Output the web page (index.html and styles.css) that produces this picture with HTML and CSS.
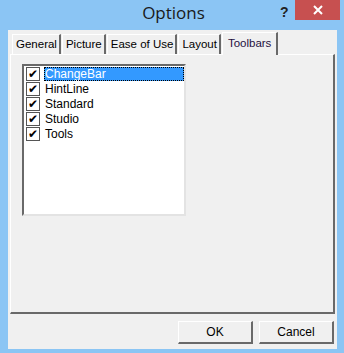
FILE: index.html
```html
<!DOCTYPE html>
<html lang="en">
<head>
    <meta charset="UTF-8">
    <title>Options</title>
    <link rel="stylesheet" href="styles.css">
</head>
<body>
    <div class="window">
        <div class="titlebar">
            <span class="title">Options</span>
            <span class="help">?</span>
            <span class="close">
                <svg width="10" height="10" viewBox="0 0 10 10">
                    <path d="M1 1 L9 9 M9 1 L1 9" stroke="#fff" stroke-width="2"/>
                </svg>
            </span>
        </div>
        <div class="client">
            <div class="tabs">
                <div class="tab">General</div>
                <div class="tab">Picture</div>
                <div class="tab">Ease of Use</div>
                <div class="tab">Layout</div>
                <div class="tab active">Toolbars</div>
            </div>
            <div class="panel">
                <div class="listbox">
                    <div class="item"><span class="check">&#10004;</span><span class="label selected">ChangeBar</span></div>
                    <div class="item"><span class="check">&#10004;</span><span class="label">HintLine</span></div>
                    <div class="item"><span class="check">&#10004;</span><span class="label">Standard</span></div>
                    <div class="item"><span class="check">&#10004;</span><span class="label">Studio</span></div>
                    <div class="item"><span class="check">&#10004;</span><span class="label">Tools</span></div>
                </div>
            </div>
            <div class="buttons">
                <button class="btn">OK</button>
                <button class="btn">Cancel</button>
            </div>
        </div>
    </div>
</body>
</html>
```

FILE: styles.css
```css
body {
    margin: 0;
    padding: 0;
    background-color: #8bc5f4;
    font-family: "Liberation Sans", Arial, sans-serif;
}

.window {
    width: 344px;
    height: 353px;
    padding: 0 7px 4px 8px;
    box-sizing: border-box;
    display: flex;
    flex-direction: column;
}

.titlebar {
    height: 30px;
    position: relative;
    display: flex;
    justify-content: center;
    align-items: center;
}

.title {
    font-family: "Open Sans", sans-serif;
    font-size: 17px;
    color: #1a1a1a;
    margin-top: -6px;
    margin-left: 2px;
}

.help {
    position: absolute;
    left: 272px;
    top: 4px;
    font-size: 14px;
    font-weight: bold;
    color: #222;
}

.close {
    position: absolute;
    right: -3px;
    top: 0;
    width: 45px;
    height: 20px;
    background-color: #c75050;
    display: flex;
    align-items: center;
    justify-content: center;
}

.client {
    flex: 1;
    background-color: #f0f0f0;
    padding: 1px 2px 0 2px;
    display: flex;
    flex-direction: column;
}

.tabs {
    display: flex;
    align-items: flex-end;
    height: 23px;
    padding-left: 2px;
    position: relative;
    z-index: 1;
}

.tab {
    height: 20px;
    box-sizing: border-box;
    padding: 3px 2px 0 3px;
    font-size: 11.5px;
    color: #000;
    border-top: 1px solid #fff;
    border-left: 1px solid #fff;
    border-right: 2px solid #696969;
    margin-right: 1px;
    background-color: #f0f0f0;
}

.tab.active {
    height: 23px;
    margin-bottom: -1px;
    padding: 4px 5px 0 5px;
    color: #1f0f3f;
}

.panel {
    height: 260px;
    box-sizing: border-box;
    border-top: 1px solid #fff;
    border-left: 1px solid #fff;
    border-right: 2px solid #696969;
    border-bottom: 2px solid #696969;
    padding: 9px 0 0 11px;
}

.listbox {
    width: 164px;
    height: 152px;
    box-sizing: border-box;
    background-color: #fff;
    border-top: 2px solid #696969;
    border-left: 2px solid #696969;
    border-right: 2px solid #e3e3e3;
    border-bottom: 2px solid #e3e3e3;
}

.item {
    height: 15px;
    display: flex;
    align-items: center;
    padding-left: 2px;
}

.check {
    width: 12px;
    height: 12px;
    border: 1px solid #555;
    background-color: #fff;
    font-size: 12px;
    line-height: 12px;
    text-align: center;
    color: #000;
    margin-right: 4px;
}

.label {
    font-size: 12px;
    line-height: 14px;
    padding-left: 1px;
    color: #000;
}

.label.selected {
    flex: 1;
    background-color: #3399ff;
    color: #fff;
    outline: 1px dotted #000;
    outline-offset: -1px;
}

.buttons {
    display: flex;
    justify-content: flex-end;
    gap: 6px;
    padding: 7px 1px 0 0;
}

.btn {
    width: 75px;
    height: 23px;
    font-family: "Liberation Sans", Arial, sans-serif;
    font-size: 12px;
    background-color: #f0f0f0;
    color: #000;
    border-top: 1px solid #fff;
    border-left: 1px solid #fff;
    border-right: 2px solid #696969;
    border-bottom: 2px solid #696969;
    padding: 0;
}
```
